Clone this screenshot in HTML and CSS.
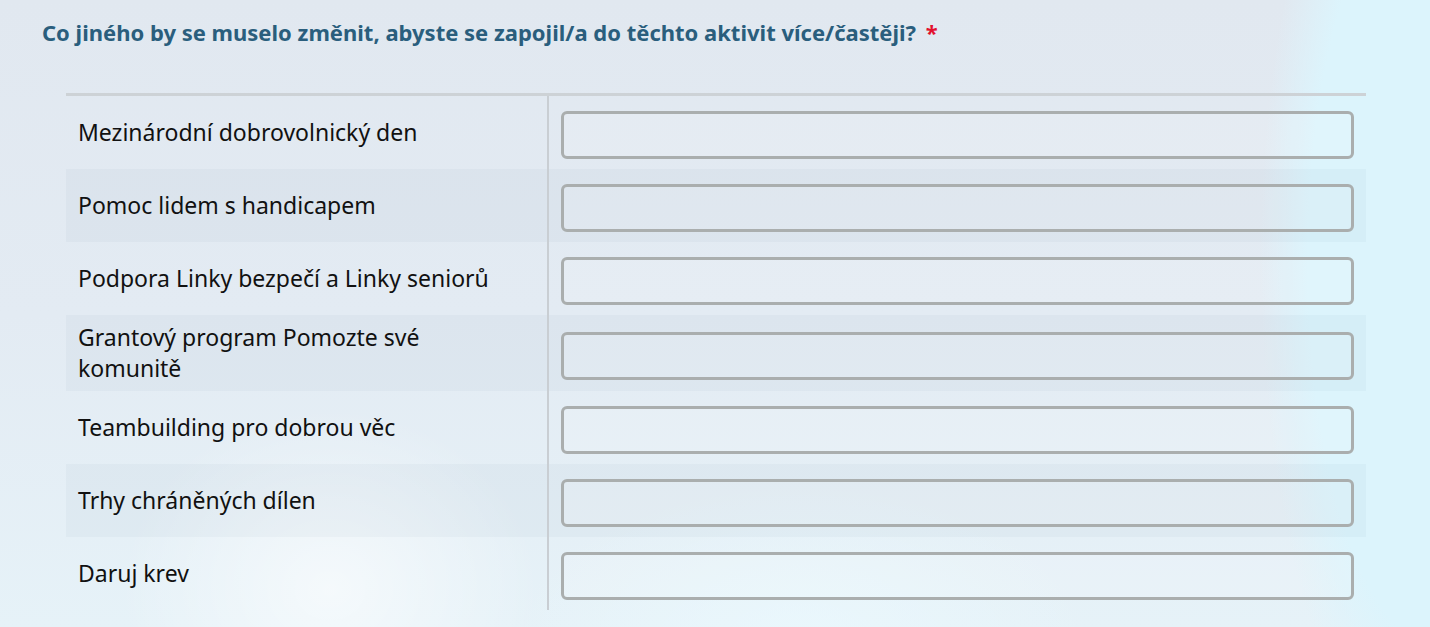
FILE: index.html
```html
<!DOCTYPE html>
<html lang="cs">
<head>
  <meta charset="UTF-8" />
  <meta name="viewport" content="width=device-width, initial-scale=1.0"/>
  <title>Dotazník – aktivity</title>
  <link rel="stylesheet" href="styles.css">
</head>
<body>

  <div class="page">
    <h2 class="question">Co jiného by se muselo změnit, abyste se zapojil/a do těchto aktivit více/častěji? <span class="required">*</span></h2>

    <!-- Matice odpovědí -->
    <table class="matrix">
      <tr>
        <td class="label"><span>Mezinárodní dobrovolnický den</span></td>
        <td class="answer"><input type="text" /></td>
      </tr>
      <tr>
        <td class="label"><span>Pomoc lidem s handicapem</span></td>
        <td class="answer"><input type="text" /></td>
      </tr>
      <tr>
        <td class="label"><span>Podpora Linky bezpečí a Linky seniorů</span></td>
        <td class="answer"><input type="text" /></td>
      </tr>
      <tr>
        <td class="label"><span>Grantový program Pomozte své komunitě</span></td>
        <td class="answer"><input type="text" /></td>
      </tr>
      <tr>
        <td class="label"><span>Teambuilding pro dobrou věc</span></td>
        <td class="answer"><input type="text" /></td>
      </tr>
      <tr>
        <td class="label"><span>Trhy chráněných dílen</span></td>
        <td class="answer"><input type="text" /></td>
      </tr>
      <tr>
        <td class="label"><span>Daruj krev</span></td>
        <td class="answer"><input type="text" /></td>
      </tr>
    </table>
  </div>

</body>
</html>
```

FILE: styles.css
```css
* {
  box-sizing: border-box;
}

html, body {
  height: 100%;
}

body {
  margin: 0;
  padding: 0;
  overflow: hidden;
  font-family: 'Noto Sans', 'Open Sans', sans-serif;
  color: #111;
  background:
    radial-gradient(ellipse 300px 260px at 330px 590px, rgba(255, 255, 255, 0.6), rgba(255, 255, 255, 0) 70%),
    radial-gradient(ellipse 420px 240px at 800px 650px, rgba(236, 250, 255, 0.7), rgba(236, 250, 255, 0) 70%),
    radial-gradient(ellipse 240px 700px at 1440px 260px, #dcf4fc 55%, rgba(220, 244, 252, 0) 75%),
    linear-gradient(180deg, #e1e8f0 0%, #e3ebf3 50%, #e6f2f8 100%);
}

.page {
  padding: 18px 0 0 0;
}

.question {
  margin: 0 0 47px 42px;
  font-size: 22px;
  line-height: 28px;
  font-weight: 700;
  color: #2a5e7d;
}

.required {
  color: #e2102e;
  margin-left: 4px;
}

.matrix {
  margin-left: 66px;
  width: 1300px;
  border-collapse: collapse;
  border-top: 3px solid #cdd2d6;
}

.matrix tr:nth-child(even) {
  background: rgba(0, 25, 60, 0.028);
}

.matrix td {
  padding: 7px 12px;
  vertical-align: middle;
}

.matrix .label {
  width: 482px;
  border-right: 2px solid #c9ced3;
  font-size: 23px;
  line-height: 31px;
}

.matrix .label span {
  display: block;
  max-width: 420px;
}

.matrix .answer {
  padding-left: 12px;
}

.matrix input {
  display: block;
  width: 100%;
  height: 48px;
  margin: 8px 0 3px;
  border: 3px solid #aaaeae;
  border-radius: 6px;
  background: rgba(255, 255, 255, 0.12);
  font: inherit;
  outline: none;
}
```
